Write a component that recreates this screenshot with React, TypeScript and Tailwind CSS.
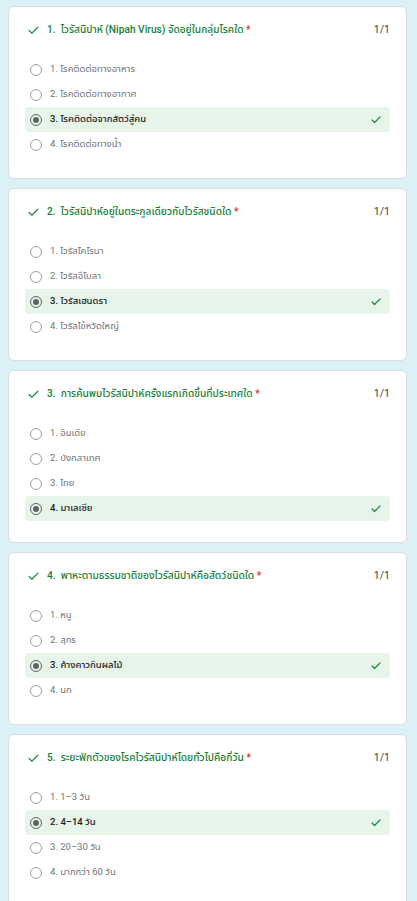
import { Check } from 'lucide-react';

type Question = {
  no: number;
  title: string;
  options: string[];
  answer: number;
};

const questions: Question[] = [
  {
    no: 1,
    title: 'ไวรัสนิปาห์ (Nipah Virus) จัดอยู่ในกลุ่มโรคใด',
    options: ['1. โรคติดต่อทางอาหาร', '2. โรคติดต่อทางอากาศ', '3. โรคติดต่อจากสัตว์สู่คน', '4. โรคติดต่อทางน้ำ'],
    answer: 2,
  },
  {
    no: 2,
    title: 'ไวรัสนิปาห์อยู่ในตระกูลเดียวกับไวรัสชนิดใด',
    options: ['1. ไวรัสโคโรนา', '2. ไวรัสอีโบลา', '3. ไวรัสเฮนดรา', '4. ไวรัสไข้หวัดใหญ่'],
    answer: 2,
  },
  {
    no: 3,
    title: 'การค้นพบไวรัสนิปาห์ครั้งแรกเกิดขึ้นที่ประเทศใด',
    options: ['1. อินเดีย', '2. บังกลาเทศ', '3. ไทย', '4. มาเลเซีย'],
    answer: 3,
  },
  {
    no: 4,
    title: 'พาหะตามธรรมชาติของไวรัสนิปาห์คือสัตว์ชนิดใด',
    options: ['1. หนู', '2. สุกร', '3. ค้างคาวกินผลไม้', '4. นก'],
    answer: 2,
  },
  {
    no: 5,
    title: 'ระยะฟักตัวของโรคไวรัสนิปาห์โดยทั่วไปคือกี่วัน',
    options: ['1. 1–3 วัน', '2. 4–14 วัน', '3. 20–30 วัน', '4. มากกว่า 60 วัน'],
    answer: 1,
  },
];

function Radio({ checked }: { checked: boolean }) {
  return (
    <span
      className={`flex h-3 w-3 shrink-0 items-center justify-center rounded-full border ${
        checked ? 'border-[#5f6368]' : 'border-[#9aa0a6]'
      }`}
    >
      {checked && <span className="h-[6px] w-[6px] rounded-full bg-[#5f6368]" />}
    </span>
  );
}

function QuestionCard({ q }: { q: Question }) {
  return (
    <div className="h-[173px] shrink-0 rounded-md border border-[#dadce0] bg-white px-4 pt-[15px]">
      <div className="flex h-4 items-center">
        <Check className="ml-[2px] h-[13px] w-[13px] shrink-0 text-[#1e8e3e]" strokeWidth={2.2} />
        <div className="ml-[7px] flex-1 truncate text-[10.2px] font-medium text-[#188038]">
          {q.no}.&nbsp;&nbsp;{q.title} <span className="text-[#d93025]">*</span>
        </div>
        <div className="text-[10.5px] text-[#3c4043]">1/1</div>
      </div>
      <div className="mt-[19px] flex flex-col">
        {q.options.map((opt, i) => {
          const sel = i === q.answer;
          return (
            <div
              key={opt}
              className={`flex h-[25px] items-center rounded pl-[5px] pr-[8px] ${sel ? 'bg-[#e6f4ea]' : ''}`}
            >
              <Radio checked={sel} />
              <span
                className={`ml-[8px] flex-1 text-[9.5px] ${
                  sel ? 'font-medium text-[#202124]' : 'text-[#70757a]'
                }`}
              >
                {opt}
              </span>
              {sel && <Check className="h-3 w-3 text-[#1e8e3e]" strokeWidth={2.5} />}
            </div>
          );
        })}
      </div>
    </div>
  );
}

export default function App() {
  return (
    <div
      className="flex h-[901px] flex-col gap-[9px] overflow-hidden bg-[#dcf0f8] pl-2 pr-[10px] pt-[6px]"
      style={{ fontFamily: 'Roboto, "Noto Sans Thai", "Noto Sans", "DejaVu Sans", sans-serif' }}
    >
      {questions.map(q => (
        <QuestionCard key={q.no} q={q} />
      ))}
    </div>
  );
}
